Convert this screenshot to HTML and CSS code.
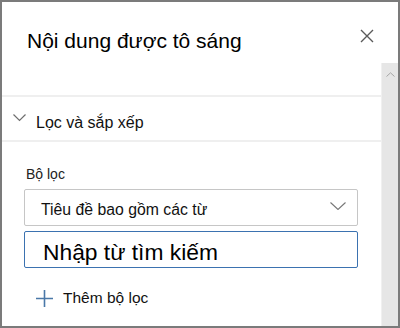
FILE: index.html
```html
<!DOCTYPE html>
<html lang="vi">

<head>
    <meta charset="UTF-8">
    <meta name="viewport" content="width=device-width, initial-scale=1.0">
    <title>Nội dung được tô sáng</title>
    <link rel="stylesheet" href="styles.css">
</head>

<body>

    <div class="panel">
        <div class="panelHeader">
            <h2 class="panelTitle">Nội dung được tô sáng</h2>
            <button class="closeBtn" aria-label="Đóng">
                <svg width="14" height="14" viewBox="0 0 14 14">
                    <path d="M1 1 L13 13 M13 1 L1 13" stroke="#5a5a5a" stroke-width="1.4" fill="none" />
                </svg>
            </button>
        </div>

        <div class="panelMain">
            <div class="panelContent">
                <div class="spacer"></div>
                <div class="divider"></div>

                <div class="sectionHead">
                    <svg class="chevron" width="13" height="8" viewBox="0 0 13 8">
                        <path d="M0.5 0.5 L6.5 6.5 L12.5 0.5" stroke="#6e6e6e" stroke-width="1.2" fill="none" />
                    </svg>
                    <span>Lọc và sắp xếp</span>
                </div>

                <div class="divider"></div>

                <div class="filters">
                    <label class="fieldLabel" for="filterType">Bộ lọc</label>
                    <div class="dropdown" id="filterType">
                        <span>Tiêu đề bao gồm các từ</span>
                        <svg width="16" height="8" viewBox="0 0 16 8">
                            <path d="M0.5 0.5 L8 7.5 L15.5 0.5" stroke="#777" stroke-width="1.1" fill="none" />
                        </svg>
                    </div>
                    <input class="searchBox" type="text" value="Nhập từ tìm kiếm">

                    <div class="addFilter">
                        <svg width="17" height="17" viewBox="0 0 17 17">
                            <path d="M8.5 0 V17 M0 8.5 H17" stroke="#4a78a8" stroke-width="1.6" fill="none" />
                        </svg>
                        <span>Thêm bộ lọc</span>
                    </div>
                </div>
            </div>

            <div class="scrollbar">
                <svg width="9" height="5" viewBox="0 0 9 5">
                    <path d="M0.5 4.5 L4.5 0.8 L8.5 4.5" stroke="#a6a6a6" stroke-width="1" fill="none" />
                </svg>
            </div>
        </div>
    </div>

</body>

</html>
```

FILE: styles.css
```css
body {
    margin: 0;
    padding: 0;
    font-family: "Liberation Sans", Arial, sans-serif;
    color: #111;
}

.panel {
    width: 400px;
    height: 328px;
    box-sizing: border-box;
    border: 2px solid #7b7b7b;
    background-color: #fff;
    display: flex;
    flex-direction: column;
    overflow: hidden;
}

.panelHeader {
    height: 61px;
    flex-shrink: 0;
    display: flex;
    align-items: flex-start;
    justify-content: space-between;
    padding: 0 24px 0 25px;
    box-sizing: border-box;
}

.panelTitle {
    margin: 26px 0 0 0;
    font-size: 21px;
    line-height: 25px;
    font-weight: normal;
    color: #000;
}

.closeBtn {
    margin-top: 27px;
    padding: 0;
    border: none;
    background: none;
    width: 14px;
    height: 14px;
}

.closeBtn svg {
    display: block;
}

.panelMain {
    flex: 1;
    display: flex;
    min-height: 0;
}

.panelContent {
    flex: 1;
}

.spacer {
    height: 32px;
}

.divider {
    height: 2px;
    background-color: #efefef;
}

.sectionHead {
    height: 43px;
    box-sizing: border-box;
    padding: 16px 0 0 11px;
    display: flex;
    align-items: flex-start;
    gap: 10px;
    font-size: 16px;
    line-height: 20px;
    color: #111;
}

.sectionHead .chevron {
    margin-top: 1px;
}

.filters {
    padding: 24px 23px 0 22px;
}

.fieldLabel {
    display: block;
    margin-left: 2px;
    font-size: 14px;
    line-height: 17px;
    color: #222;
}

.dropdown {
    margin-top: 6px;
    height: 37px;
    box-sizing: border-box;
    border: 1px solid #c6c6c6;
    border-radius: 2px;
    display: flex;
    align-items: center;
    justify-content: space-between;
    padding: 4px 11px 0 16px;
    font-size: 15.8px;
    color: #111;
}

.dropdown svg {
    margin-top: -8px;
}

.searchBox {
    display: block;
    margin-top: 5px;
    width: 100%;
    height: 37px;
    box-sizing: border-box;
    border: 1px solid #3b72b0;
    border-radius: 2px;
    padding: 5px 0 0 18px;
    font-family: "Liberation Sans", Arial, sans-serif;
    font-size: 22.8px;
    color: #000;
    outline: none;
}

.addFilter {
    margin-top: 21px;
    padding-left: 12px;
    display: flex;
    align-items: center;
    gap: 10px;
    font-size: 15.5px;
    color: #111;
}

.scrollbar {
    width: 17px;
    flex-shrink: 0;
    background-color: #e6e6e6;
    border-left: 1px solid #f0f0f0;
    display: flex;
    justify-content: center;
    padding-top: 9px;
    box-sizing: border-box;
}

.scrollbar svg {
    display: block;
}
```
